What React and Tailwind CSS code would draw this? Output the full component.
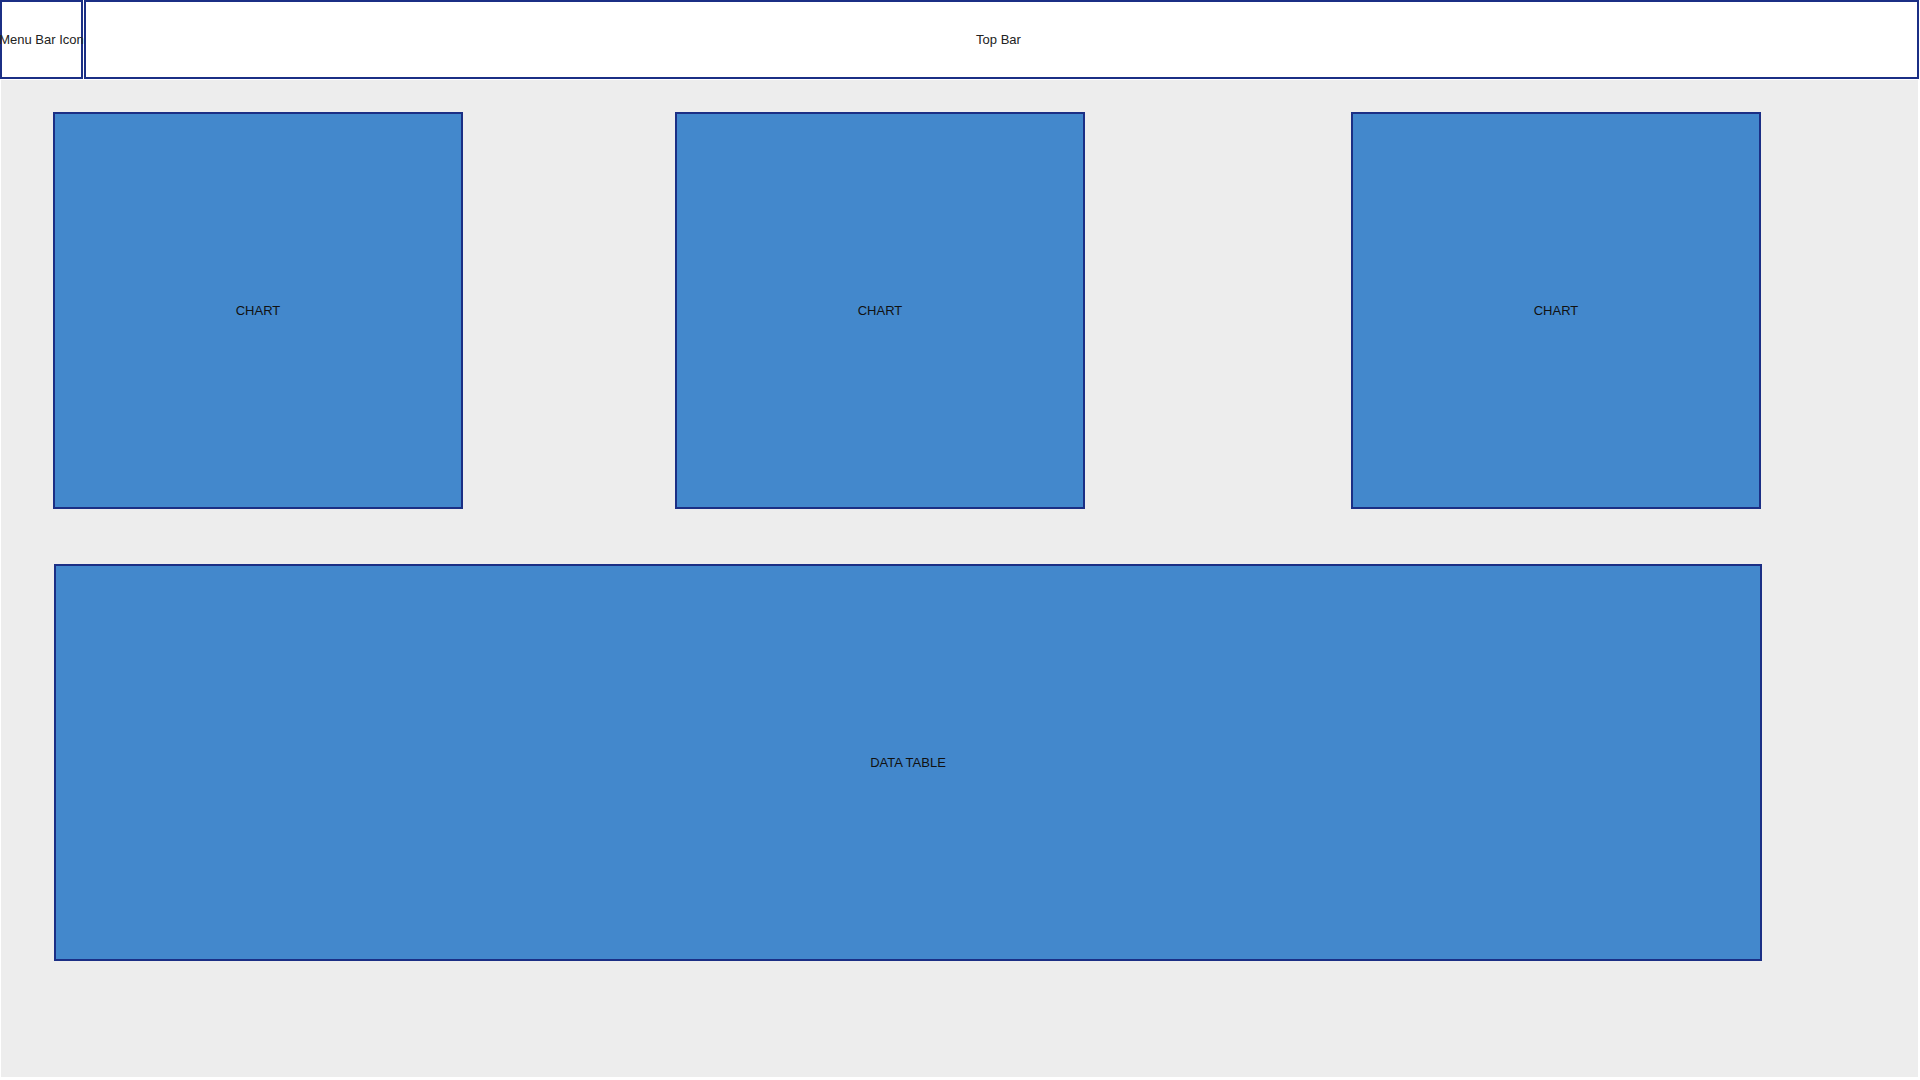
export default function App() {
  return (
    <div className="w-[1920px] h-[1080px] bg-white font-['Liberation_Sans',Arial,sans-serif] text-[13px] text-[#222] overflow-hidden">
      {/* Header */}
      <div className="flex h-[79px]">
        <div className="w-[83px] h-full border-2 border-[#1b2f85] bg-white flex items-center justify-center whitespace-nowrap overflow-visible">
          <span className="-mx-3">Menu Bar Icon</span>
        </div>
        <div className="ml-[1px] w-[1835px] h-full border-2 border-[#1b2f85] bg-white flex items-center justify-center">
          <span className="-ml-[6px]">Top Bar</span>
        </div>
      </div>

      {/* Body */}
      <div className="ml-[1px] mt-[1px] w-[1917px] h-[997px] bg-[#ededed] pt-[32px] pl-[52px]">
        <div className="flex">
          <div className="w-[410px] h-[397px] border-2 border-[#1b2f85] bg-[#4388cc] flex items-center justify-center text-[#111]">
            CHART
          </div>
          <div className="ml-[212px] w-[410px] h-[397px] border-2 border-[#1b2f85] bg-[#4388cc] flex items-center justify-center text-[#111]">
            CHART
          </div>
          <div className="ml-[266px] w-[410px] h-[397px] border-2 border-[#1b2f85] bg-[#4388cc] flex items-center justify-center text-[#111]">
            CHART
          </div>
        </div>
        <div className="mt-[55px] ml-[1px] w-[1708px] h-[397px] border-2 border-[#1b2f85] bg-[#4388cc] flex items-center justify-center text-[#111]">
          DATA TABLE
        </div>
      </div>
    </div>
  );
}
